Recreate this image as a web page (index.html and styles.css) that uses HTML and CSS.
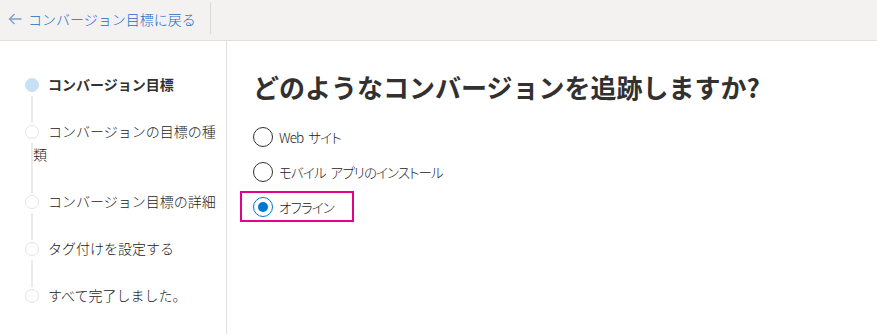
FILE: index.html
```html
<!DOCTYPE html>
<html lang="ja">
<head>
<meta charset="utf-8">
<link rel="stylesheet" href="styles.css">
</head>
<body>
<header class="topbar">
  <a class="back" href="#">
    <svg class="back-arrow" width="14" height="12" viewBox="0 0 14 12"><path d="M13.5 6H1.5M6.5 1L1.5 6l5 5" fill="none" stroke="#7f9fd3" stroke-width="1.4"/></svg>
    <span>コンバージョン目標に戻る</span>
  </a>
  <div class="sep"></div>
</header>
<div class="main">
  <nav class="sidebar">
    <div class="step active"><span class="dot"></span>コンバージョン目標</div>
    <div class="step"><span class="dot"></span>コンバージョンの目標の種類</div>
    <div class="step"><span class="dot"></span>コンバージョン目標の詳細</div>
    <div class="step"><span class="dot"></span>タグ付けを設定する</div>
    <div class="step last"><span class="dot"></span>すべて完了しました。</div>
  </nav>
  <section class="content">
    <h1 class="title">どのようなコンバージョンを追跡しますか?</h1>
    <div class="options">
      <label class="option"><span class="radio"></span><span class="label">Web サイト</span></label>
      <label class="option"><span class="radio"></span><span class="label">モバイル アプリのインストール</span></label>
      <label class="option selected"><span class="radio"><span class="radio-dot"></span></span><span class="label">オフライン</span></label>
    </div>
  </section>
</div>
</body>
</html>
```
FILE: styles.css
```css
* { box-sizing: border-box; }
html, body { margin: 0; padding: 0; background: #fff; }
body {
  font-family: "Noto Sans CJK JP", "Noto Sans", sans-serif;
  color: #1b1a19;
  font-size: 14px;
  font-weight: 300;
  width: 877px;
  height: 334px;
  overflow: hidden;
}
.topbar {
  height: 41px;
  background: #f3f2f1;
  border-bottom: 1px solid #e1dfdd;
  display: flex;
  align-items: center;
}
.back {
  width: 210px;
  display: flex;
  align-items: center;
  padding: 0 0 2px 8px;
  color: #1a6bc6;
  text-decoration: none;
  font-size: 14px;
  line-height: 20px;
}
.back-arrow { margin-right: 6px; }
.sep {
  width: 1px;
  height: 32px;
  background: #dcdad8;
  margin-bottom: 4px;
}
.main {
  display: flex;
  height: 293px;
}
.sidebar {
  width: 227px;
  border-right: 1px solid #e1dfdd;
  padding: 32px 10px 0 33px;
}
.step {
  position: relative;
  line-height: 23px;
  padding-bottom: 24px;
  font-size: 14px;
  color: #1b1a19;
}
.step.active { font-weight: 700; color: #323130; }
.dot {
  display: inline-block;
  vertical-align: top;
  width: 14px;
  height: 14px;
  margin: 4.5px 9px 0 -8px;
  border-radius: 50%;
  border: 1.5px solid #e6e4e2;
  background: #fff;
}
.step.active .dot { background: #c7e0f4; border-color: #c7e0f4; }
.step::after {
  content: "";
  position: absolute;
  left: -2px;
  top: 23px;
  bottom: -3px;
  width: 2px;
  background: #edebe9;
}
.step.last::after { display: none; }
.content {
  flex: 1;
  padding: 0 0 0 26px;
}
.title {
  margin: 28px 0 14px;
  font-size: 26px;
  line-height: 36px;
  font-weight: 700;
  color: #323130;
}
.options {
  display: flex;
  flex-direction: column;
  align-items: flex-start;
}
.option {
  display: flex;
  align-items: center;
  height: 35px;
  font-size: 13.5px;
  color: #1b1a19;
}
.label { font-feature-settings: "palt"; letter-spacing: -0.9px; word-spacing: 3px; }
.radio {
  width: 20px;
  height: 20px;
  border-radius: 50%;
  border: 1px solid #323130;
  margin-right: 6px;
  display: flex;
  align-items: center;
  justify-content: center;
}
.option.selected {
  height: 31px;
  margin: 2px 0 0 -13px;
  padding: 0 18px 0 11px;
  border: 2px solid #e3008c;
}
.option.selected .radio { border-color: #0078d4; }
.radio-dot {
  width: 10px;
  height: 10px;
  border-radius: 50%;
  background: #0078d4;
}
```
